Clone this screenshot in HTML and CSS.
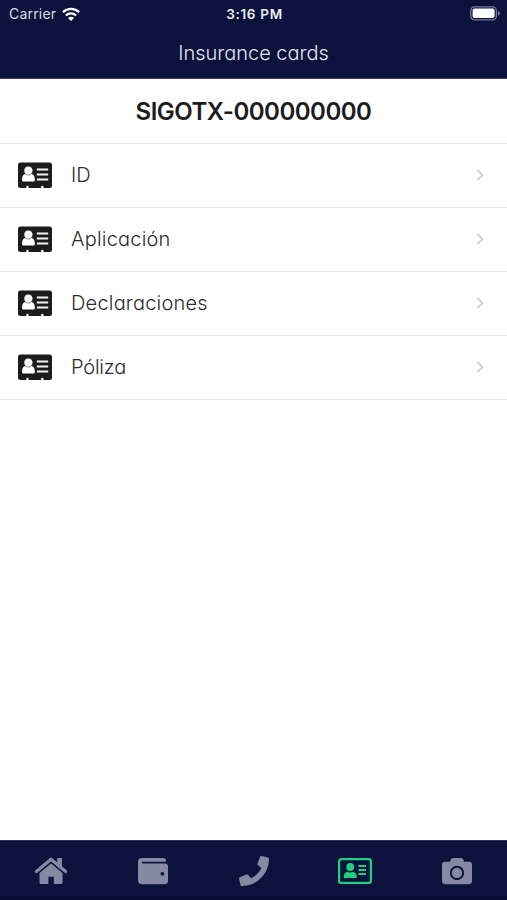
FILE: index.html
```html
<!DOCTYPE html>
<html lang="es">
<head>
<meta charset="utf-8">
<title>Insurance cards</title>
<link rel="stylesheet" href="styles.css">
</head>
<body>
<svg width="0" height="0" class="defs">
  <symbol id="card" viewBox="0 0 34 26">
    <path fill="#1c1c1e" d="M2.500 .5h29A2.500 2.500 0 0 1 34 3v20.500A2.500 2.500 0 0 1 31.500 26H25.500V24.900a1.200 1.200 0 0 0-2.400 0V26H10.700V24.900a1.200 1.200 0 0 0-2.400 0V26h-5.800A2.500 2.500 0 0 1 0 23.500V3A2.500 2.500 0 0 1 2.500 .5z"/>
    <path fill="#fff" d="M4 18c0-4.200 1.500-6.300 4.200-6.300h4.400c2.700 0 4.200 2.100 4.200 6.300 0 1-.5 1.500-1.500 1.500H5.500c-1 0-1.500-.5-1.500-1.500z"/>
    <circle cx="10.400" cy="8.600" r="4.400" fill="#fff" stroke="#1c1c1e" stroke-width=".5"/>
    <path stroke="#f4f4f4" stroke-width="2" d="M18.800 7.500h11.400M18.800 12.500h11.400M18.800 17.500h11.400"/>
  </symbol>
  <symbol id="chevron" viewBox="0 0 8 14">
    <path d="M1.300 1.800 6.500 7l-5.200 5.200" fill="none" stroke="#cdcdcf" stroke-width="1.800"/>
  </symbol>
</svg>
<header class="header">
  <div class="status">
    <div class="carrier"><span class="carrier-name">Carrier</span>
      <svg class="wifi" viewBox="0 0 18 14"><g fill="none" stroke="#fff" stroke-width="2.400"><path d="M.9 5.200a11.500 11.500 0 0 1 16.200 0"/><path d="M3.900 8.500a7.200 7.200 0 0 1 10.200 0"/></g><path fill="#fff" d="M6 10.900a4.250 4.250 0 0 1 6 0L9 13.900z"/></svg>
    </div>
    <div class="time">3:16 PM</div>
    <svg class="battery" viewBox="0 0 31 15"><rect x=".8" y=".8" width="25.600" height="13" rx="3.800" fill="none" stroke="#77799a" stroke-width="1.300"/><rect x="2.600" y="2.600" width="22" height="9.400" rx="1.900" fill="#fff"/><path d="M28 5c2.700.8 2.700 3.900 0 4.700z" fill="#77799a"/></svg>
  </div>
  <h1 class="title"><span>Insurance cards</span></h1>
</header>
<main class="content">
  <h2 class="policy"><span>SIGOTX-000000000</span></h2>
  <a class="row"><svg class="card"><use href="#card"/></svg><span class="label">ID</span><svg class="chevron"><use href="#chevron"/></svg></a>
  <a class="row"><svg class="card"><use href="#card"/></svg><span class="label wide">Aplicación</span><svg class="chevron"><use href="#chevron"/></svg></a>
  <a class="row"><svg class="card"><use href="#card"/></svg><span class="label wide">Declaraciones</span><svg class="chevron"><use href="#chevron"/></svg></a>
  <a class="row"><svg class="card"><use href="#card"/></svg><span class="label tight">Póliza</span><svg class="chevron"><use href="#chevron"/></svg></a>
</main>
<nav class="tabs">
  <a class="tab"><svg width="34" height="28" viewBox="0 0 34 28"><path fill="none" stroke="currentColor" stroke-width="3.300" stroke-linecap="round" stroke-linejoin="round" d="M2.400 14.500 17 2.300l14.600 12.200"/><path fill="currentColor" d="M23.300 1h4.600v9.100l-4.600-3.600zM17 6.500l11.500 9.600v9.600q0 1.300-1.300 1.300h-7.400v-7.300h-5.400V27H6.800q-1.300 0-1.300-1.300v-9.600z"/></svg></a>
  <a class="tab"><svg width="30" height="30" viewBox="0 0 512 512"><path fill="currentColor" d="M461.200 128H80c-8.840 0-16-7.160-16-16s7.160-16 16-16h384c8.840 0 16-7.160 16-16 0-26.510-21.490-48-48-48H64C28.650 32 0 60.650 0 96v320c0 35.350 28.650 64 64 64h397.200c28.020 0 50.800-21.530 50.800-48V176c0-26.470-22.780-48-50.800-48zM416 336c-17.670 0-32-14.330-32-32s14.330-32 32-32 32 14.330 32 32-14.330 32-32 32z"/></svg></a>
  <a class="tab"><svg width="30" height="30" viewBox="0 0 512 512"><path fill="currentColor" d="M493.400 24.600l-104-24c-11.300-2.600-22.900 3.300-27.500 13.900l-48 112c-4.200 9.800-1.400 21.300 6.900 28l60.600 49.600c-36 76.700-98.900 140.500-177.200 177.200l-49.600-60.600c-6.800-8.300-18.200-11.100-28-6.900l-112 48C3.900 366.500-2 378.100.6 389.400l24 104C27.100 504.200 36.700 512 48 512c256.100 0 464-207.500 464-464 0-11.200-7.700-20.900-18.600-23.400z"/></svg></a>
  <a class="tab active"><svg width="34" height="28" viewBox="0 0 34 28"><rect x="1.100" y="2.100" width="31.800" height="23.800" rx="2" fill="none" stroke="currentColor" stroke-width="2.200"/><circle cx="12.200" cy="10" r="3.900" fill="currentColor"/><path fill="currentColor" d="M5.700 21v-1.300c0-2.700 1.800-4.600 4.200-4.600 1.500.6 3.100.6 4.600 0 2.500 0 4.300 1.900 4.300 4.600V21z"/><path stroke="currentColor" stroke-width="1.900" d="M20.500 9H28M20.500 13H28M20.500 17H28"/></svg></a>
  <a class="tab"><svg width="30" height="30" viewBox="0 0 512 512"><path fill="currentColor" d="M512 144v288c0 26.500-21.500 48-48 48H48c-26.500 0-48-21.500-48-48V144c0-26.500 21.500-48 48-48h88l12.300-32.900c7-18.700 24.900-31.100 44.900-31.100h125.500c20 0 37.900 12.400 44.900 31.100L376 96h88c26.500 0 48 21.500 48 48zM376 288c0-66.200-53.800-120-120-120s-120 53.800-120 120 53.800 120 120 120 120-53.800 120-120zm-32 0c0 48.500-39.500 88-88 88s-88-39.500-88-88 39.500-88 88-88 88 39.500 88 88z"/></svg></a>
</nav>
</body>
</html>
```
FILE: styles.css
```css
* { box-sizing: border-box; }
body {
  margin: 0;
  height: 900px;
  display: flex;
  flex-direction: column;
  overflow: hidden;
  background: #fff;
  color: #1c1c1e;
  font-family: Inter, "Open Sans", sans-serif;
}
svg { display: block; flex: none; }
.defs { display: none; }
.header {
  height: 79px;
  background: #0b123c;
  border-bottom: 1px solid #3a3f62;
  color: #fff;
}
.status {
  height: 27px;
  display: grid;
  grid-template-columns: 1fr auto 1fr;
  align-items: center;
  padding: 0 6px 0 9px;
}
.carrier { display: flex; align-items: center; gap: 6px; font-size: 14px; color: #dcdde8; }
.carrier-name { letter-spacing: 0.2px; }
.wifi { width: 18px; height: 14px; }
.time { font-size: 13.500px; font-weight: 600; letter-spacing: 0.700px; margin-left: -1px; color: #eeeef5; }
.battery { width: 31px; height: 15px; justify-self: end; }
.title {
  margin: 0;
  height: 51px;
  line-height: 53px;
  text-align: center;
  font-size: 20px;
  font-weight: 300;
  font-feature-settings: "cv11";
  color: #e3e4ee;
}
.content { flex: 1; }
.policy {
  margin: 0;
  height: 64.500px;
  line-height: 65px;
  border-bottom: 1px solid #e6e6e6;
  text-align: center;
  font-size: 24px;
  font-weight: 600;
  letter-spacing: -0.500px;
}
.row {
  height: 64px;
  display: flex;
  align-items: center;
  padding: 0 23px 0 18px;
  border-bottom: 1px solid #e6e6e6;
}
.card { width: 34px; height: 26px; }
.label {
  flex: 1;
  margin-left: 19px;
  font-size: 20px;
  font-weight: 300;
  font-feature-settings: "cv11";
  color: #2c2c2e;
}
.wide { letter-spacing: 0.200px; }
.tight { letter-spacing: -0.200px; }
.chevron { width: 8px; height: 14px; }
.tabs {
  height: 60px;
  display: grid;
  grid-template-columns: repeat(5, 1fr);
  background: #0b123c;
  border-top: 1px solid #30365a;
  border-bottom: 4px solid #070d31;
}
.tab { display: flex; align-items: center; justify-content: center; padding: 5px 0 0 1px; color: #858aa3; }
.active { color: #1fd080; }
```
